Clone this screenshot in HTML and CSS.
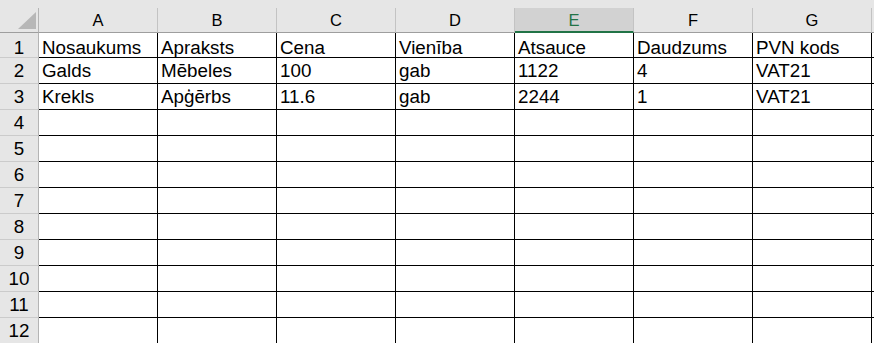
FILE: index.html
```html
<!DOCTYPE html>
<html lang="lv">

<head>
    <meta charset="UTF-8">
    <title>Lapa1</title>
    <link rel="stylesheet" href="styles.css">
</head>

<body>
    <div class="sheet">
        <div class="topbar"></div>

        <div class="row head">
            <div class="corner">
                <svg width="38" height="24" viewBox="0 0 38 24">
                    <polygon points="18,21 36,21 36,4" fill="#b7b7b7" />
                </svg>
            </div>
            <div class="col">A</div>
            <div class="col">B</div>
            <div class="col">C</div>
            <div class="col">D</div>
            <div class="col selected">E</div>
            <div class="col">F</div>
            <div class="col">G</div>
            <div class="col"></div>
        </div>

        <div class="row first">
            <div class="num">1</div>
            <div class="cell">Nosaukums</div>
            <div class="cell">Apraksts</div>
            <div class="cell">Cena</div>
            <div class="cell">Vienība</div>
            <div class="cell">Atsauce</div>
            <div class="cell">Daudzums</div>
            <div class="cell">PVN kods</div>
            <div class="cell"></div>
        </div>
        <div class="row">
            <div class="num">2</div>
            <div class="cell">Galds</div>
            <div class="cell">Mēbeles</div>
            <div class="cell">100</div>
            <div class="cell">gab</div>
            <div class="cell">1122</div>
            <div class="cell">4</div>
            <div class="cell">VAT21</div>
            <div class="cell"></div>
        </div>
        <div class="row">
            <div class="num">3</div>
            <div class="cell">Krekls</div>
            <div class="cell">Apģērbs</div>
            <div class="cell">11.6</div>
            <div class="cell">gab</div>
            <div class="cell">2244</div>
            <div class="cell">1</div>
            <div class="cell">VAT21</div>
            <div class="cell"></div>
        </div>
    </div>

    <script>
        // empty rows 4..12
        const sheet = document.querySelector('.sheet');
        for (let i = 4; i <= 12; i++) {
            const row = document.createElement('div');
            row.className = 'row';
            row.innerHTML = `<div class="num">${i}</div>` + '<div class="cell"></div>'.repeat(8);
            sheet.appendChild(row);
        }
    </script>
</body>

</html>
```

FILE: styles.css
```css
body {
    margin: 0;
    background-color: #ffffff;
    font-family: 'Liberation Sans', Arial, sans-serif;
    color: #000000;
    overflow: hidden;
}

.sheet {
    width: max-content;
}

.topbar {
    height: 8px;
    background-color: #e6e6e6;
}

.row {
    display: grid;
    grid-template-columns: 39px repeat(8, 119px);
    height: 26px;
}

.row.first {
    height: 25px;
}

.row.head {
    height: 25px;
    background-color: #e6e6e6;
}

.corner {
    border-right: 1px solid #b4b4b4;
    border-bottom: 1px solid #9e9e9e;
    display: flex;
}

.col {
    display: flex;
    justify-content: center;
    align-items: center;
    padding-top: 1px;
    font-size: 16.5px;
    border-right: 1px solid #c3c3c3;
    border-bottom: 1px solid #9e9e9e;
}

.col.selected {
    background-color: #d2d2d2;
    color: #217346;
    border-bottom: 2px solid #217346;
}

.num {
    display: flex;
    justify-content: center;
    align-items: flex-end;
    padding-bottom: 1px;
    font-size: 18.8px;
    background-color: #e6e6e6;
    border-right: 1px solid #b4b4b4;
    border-bottom: 1px solid #cbcbcb;
}

.cell {
    display: flex;
    align-items: flex-end;
    padding: 0 0 1px 3px;
    font-size: 18.8px;
    white-space: nowrap;
    overflow: hidden;
    border-right: 1px solid #000000;
    border-bottom: 1px solid #000000;
}

.row.first .cell,
.row.first .num {
    padding-bottom: 0;
    line-height: 19px;
}
```
